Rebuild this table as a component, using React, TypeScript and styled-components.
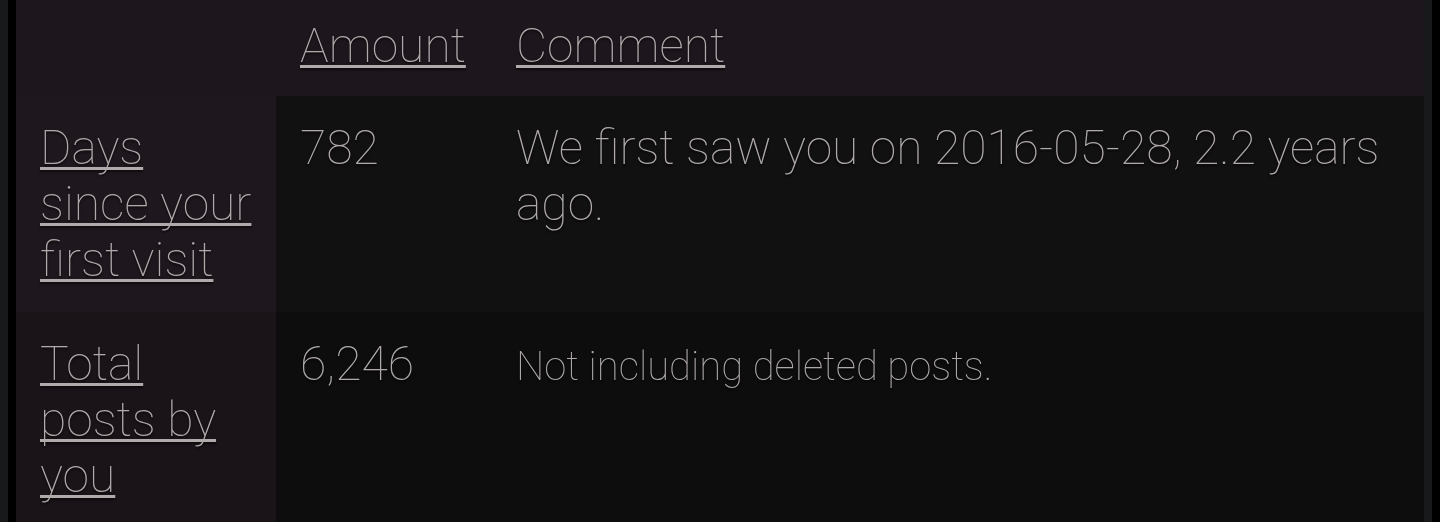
import React from "react";
import styled, { createGlobalStyle } from "styled-components";

const GlobalStyle = createGlobalStyle`
  html, body {
    margin: 0;
    padding: 0;
    background: #18191a;
    overflow: hidden;
  }
`;

const Page = styled.div`
  padding-left: 8px;
  height: 522px;
`;

const Frame = styled.div`
  display: flex;
  height: 100%;
  padding-left: 8px;
  background: #000;
`;

const Gutter = styled.div`
  width: 8px;
  flex: none;
  background: #18191a;
`;

const Table = styled.table`
  width: 1408px;
  flex: none;
  align-self: flex-start;
  border-collapse: collapse;
  font-family: Roboto, "Liberation Sans", sans-serif;
  font-weight: 100;
  font-size: 48px;
  line-height: 56px;
  color: #afa9aa;
  text-shadow: 0 2px 2px rgba(0, 0, 0, 0.6);
  opacity: 0.999;
`;

const HeadRow = styled.tr`
  background: #1e161d;
`;

const HeadCell = styled.th<{ $wide?: boolean }>`
  text-align: left;
  font-weight: 100;
  padding: 18px 24px 22px;
  width: ${(p) => (p.$wide ? "auto" : "168px")};
  white-space: nowrap;
`;

const Row = styled.tr<{ $odd?: boolean }>`
  background: ${(p) => (p.$odd ? "#121112" : "#0d0d0d")};
`;

const Label = styled.th<{ $odd?: boolean }>`
  text-align: left;
  font-weight: 100;
  vertical-align: baseline;
  padding: 24px;
  width: 212px;
  background: ${(p) => (p.$odd ? "#1f171e" : "#1a1419")};
`;

const Cell = styled.td`
  vertical-align: baseline;
  padding: 24px;
`;

const Link = styled.a`
  color: inherit;
  text-decoration: underline;
  text-decoration-color: #b0aaab;
  text-decoration-thickness: 3px;
  text-underline-offset: 3px;
  text-decoration-skip-ink: none;
`;

const Note = styled.span`
  font-size: 40px;
`;

const rows = [
  {
    label: "Days since your first visit",
    amount: "782",
    comment: "We first saw you on 2016-05-28, 2.2 years ago.",
    small: false,
  },
  {
    label: "Total posts by you",
    amount: "6,246",
    comment: "Not including deleted posts.",
    small: true,
  },
];

export default function App() {
  return (
    <>
      <GlobalStyle />
      <Page>
        <Frame>
          <Table>
            <thead>
              <HeadRow>
                <HeadCell />
                <HeadCell>
                  <Link href="#">Amount</Link>
                </HeadCell>
                <HeadCell $wide>
                  <Link href="#">Comment</Link>
                </HeadCell>
              </HeadRow>
            </thead>
            <tbody>
              {rows.map((r, i) => (
                <Row key={r.label} $odd={i % 2 === 0}>
                  <Label $odd={i % 2 === 0}>
                    <Link href="#">{r.label}</Link>
                  </Label>
                  <Cell>{r.amount}</Cell>
                  <Cell>{r.small ? <Note>{r.comment}</Note> : r.comment}</Cell>
                </Row>
              ))}
            </tbody>
          </Table>
          <Gutter />
        </Frame>
      </Page>
    </>
  );
}
